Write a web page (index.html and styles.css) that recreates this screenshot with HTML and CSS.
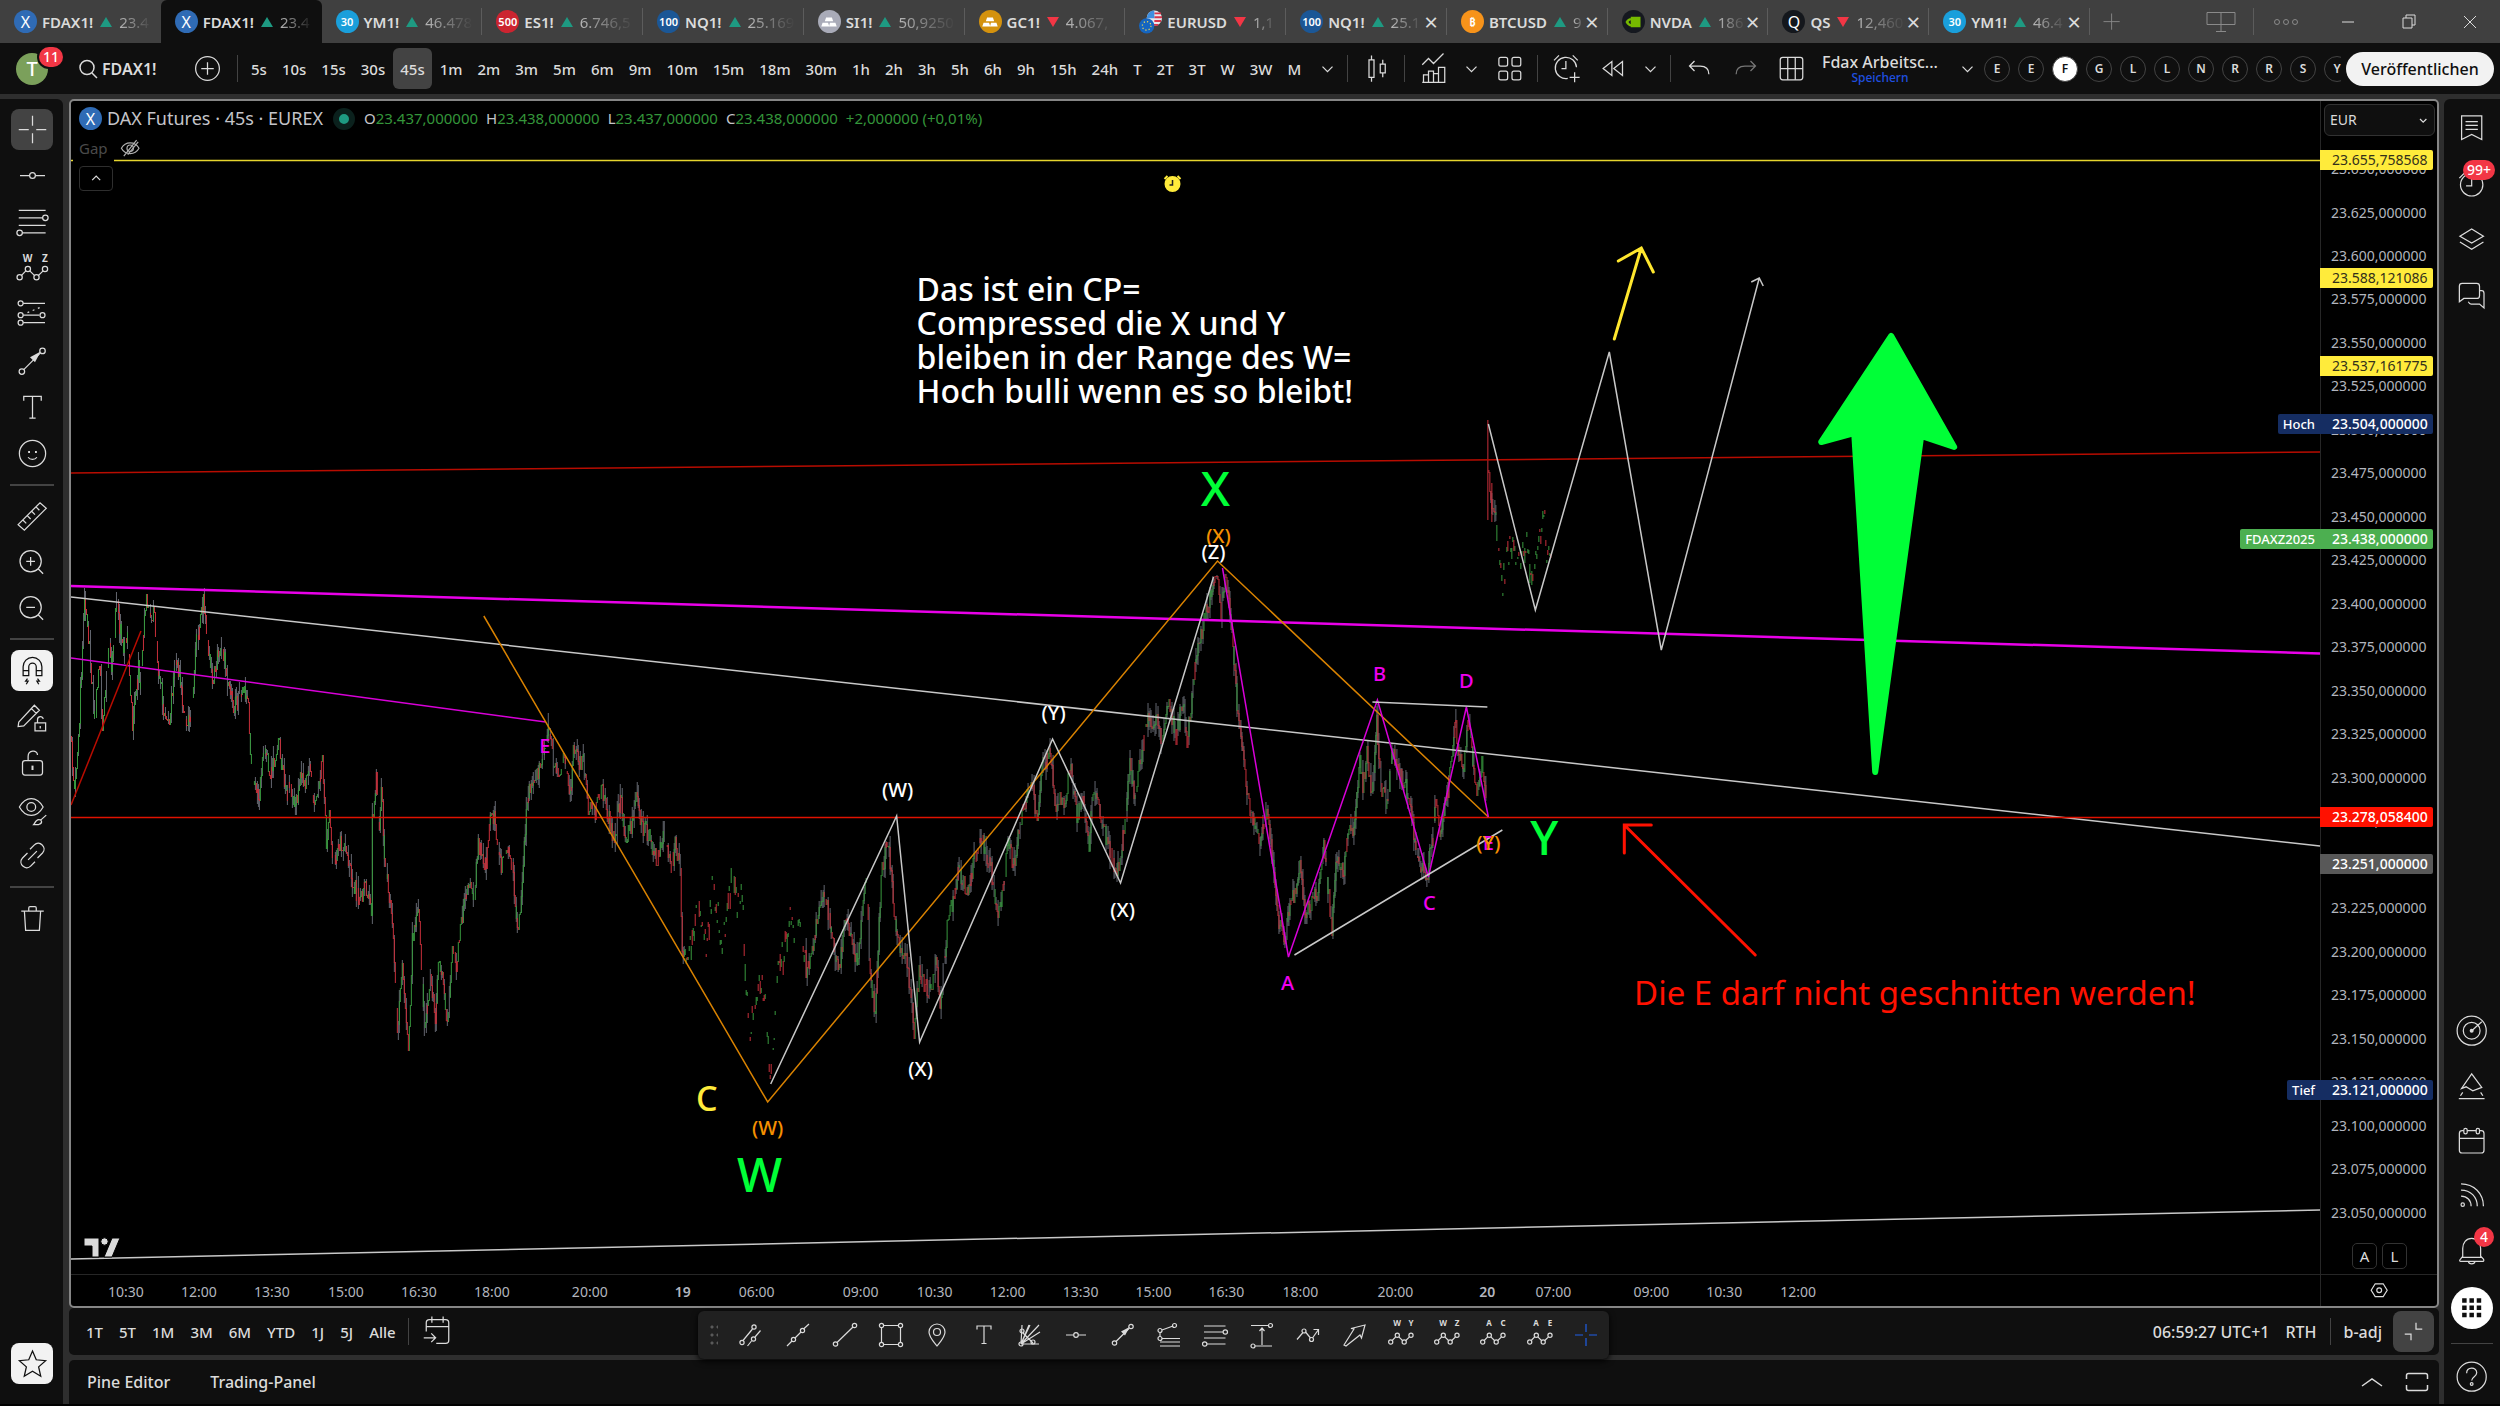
FILE: index.html
```html
<!DOCTYPE html>
<html lang="de">
<head>
<meta charset="utf-8">
<title>FDAX1! – Chart</title>
<link rel="stylesheet" href="styles.css">
</head>
<body>
<svg class="sprite" aria-hidden="true">
  <symbol id="i-search" viewBox="0 0 28 28"><circle cx="13" cy="12.500" r="7"/><path d="M18 18l5 5"/></symbol>
  <symbol id="i-plus-circle" viewBox="0 0 28 28"><circle cx="14" cy="14" r="9.500"/><path d="M14 9v10M9 14h10"/></symbol>
  <symbol id="i-chev-down" viewBox="0 0 28 28"><path d="M10 12.500l4 4 4-4"/></symbol>
  <symbol id="i-chev-up" viewBox="0 0 28 28"><path d="M9 16.500l5-5 5 5"/></symbol>
  <symbol id="i-candles" viewBox="0 0 28 28"><path d="M8 7h4v14H8zM10 3.500V7M10 21v3.500M17 10.500h4v7h-4zM19 7v3.500M19 17.500V21"/></symbol>
  <symbol id="i-indicators" viewBox="0 0 28 28"><path d="M5 11l5-5 4 4 8-8M6 25v-6h4v6M10 25V16h4v9M14 25v-7h4v7M18 25V13h5v12zM5 25h18"/></symbol>
  <symbol id="i-grid4" viewBox="0 0 28 28"><rect x="5.500" y="5" width="7" height="7" rx="1.500"/><rect x="16" y="5" width="7" height="7" rx="1.500"/><rect x="5.500" y="16" width="7" height="7" rx="1.500"/><rect x="16" y="16" width="7" height="7" rx="1.500"/></symbol>
  <symbol id="i-alert" viewBox="0 0 28 28"><path d="M22 13a8.500 8.500 0 1 0-7 8.900M13.500 8v6H10M4 7.500l4-4M19 3.500l4 4M20.500 17v8M16.500 21h8"/></symbol>
  <symbol id="i-replay" viewBox="0 0 28 28"><path d="M13.500 8.500v11L6.500 14zM22 8.500v11L15 14z"/></symbol>
  <symbol id="i-undo" viewBox="0 0 28 28"><path d="M10 8l-4 4 4 4M6 12h8.500c4 0 7 2 7 6.500"/></symbol>
  <symbol id="i-redo" viewBox="0 0 28 28"><path d="M18 8l4 4-4 4M22 12h-8.500c-4 0-7 2-7 6.500"/></symbol>
  <symbol id="i-layout" viewBox="0 0 28 28"><rect x="5" y="5" width="18" height="18" rx="2"/><path d="M11 5v18M17 5v18M5 14h18"/></symbol>
  <symbol id="i-cross" viewBox="0 0 28 28"><path d="M3 14h8M17 14h8M14 3v8M14 17v8"/></symbol>
  <symbol id="i-hline" viewBox="0 0 28 28"><path d="M4 14h7.500M16.500 14H24"/><circle cx="14" cy="14" r="2.300"/></symbol>
  <symbol id="i-fib" viewBox="0 0 28 28"><path d="M3 5h21.500M3 11h19M3 17h21.500M6 23h18.500"/><circle cx="24.300" cy="11" r="2.200"/><circle cx="3.700" cy="23" r="2.200"/></symbol>
  <symbol id="i-wave" viewBox="0 0 28 28"><path d="M5.200 19.500l3.500-3.600M11.800 15.900l3.700 3.600M18.800 19.500l3.700-3.600"/><circle cx="3.700" cy="21" r="2.100"/><circle cx="10.300" cy="14.300" r="2.100"/><circle cx="17.200" cy="21" r="2.100"/><circle cx="24" cy="14.300" r="2.100"/></symbol>
  <symbol id="i-position" viewBox="0 0 28 28"><path d="M6.500 5H24M6.500 14.500h13M6.500 20.500H24"/><path d="M10 12.500l12-5" stroke-dasharray="1.500 3"/><circle cx="4.500" cy="5" r="2"/><circle cx="4.500" cy="14.500" r="2"/><circle cx="22" cy="14.500" r="2"/><circle cx="4.500" cy="20.500" r="2"/></symbol>
  <symbol id="i-arrow" viewBox="0 0 28 28"><path d="M7 20.500L20 7.500"/><path class="solid" d="M12 10.500l8.500-4.500-4.500 8.500z"/><circle cx="5.500" cy="22" r="2.200"/><circle cx="22" cy="5.500" r="2.200"/></symbol>
  <symbol id="i-text" viewBox="0 0 28 28"><path d="M7 8.500V5h14v3.500M14 5v17.500M11.500 22.500h5"/></symbol>
  <symbol id="i-smile" viewBox="0 0 28 28"><circle cx="14" cy="14" r="10.500"/><path d="M10.500 17c1.500 2.300 5.500 2.300 7 0"/><path class="solid" d="M10.500 12h1.500v1.500h-1.500zM16 12h1.500v1.500H16z"/></symbol>
  <symbol id="i-ruler" viewBox="0 0 28 28"><path d="M2.500 20.500L20 3l5 4.500L7.500 25zM6.500 17l2.500 2.500M10 13.500l2.500 2.500M13.500 10l2.500 2.500M17 6.500L19.500 9"/></symbol>
  <symbol id="i-zoom-in" viewBox="0 0 28 28"><circle cx="12.500" cy="13" r="8.500"/><path d="M12.500 9.500v7M9 13h7M18.500 19l4 4"/></symbol>
  <symbol id="i-zoom-out" viewBox="0 0 28 28"><circle cx="12.500" cy="13" r="8.500"/><path d="M9 13h7M18.500 19l4 4"/></symbol>
  <symbol id="i-magnet" viewBox="0 0 28 28"><path d="M6.500 18v-7a7.500 7.500 0 0 1 15 0v7h-4.500v-7a3 3 0 0 0-6 0v7zM6.500 14h4.500M17 14h4.500M10 20.500l-1.500 2h2L9 25M18 20.500l1.500 2h-2L19 25"/></symbol>
  <symbol id="i-pencil-lock" viewBox="0 0 28 28"><path d="M3 18.500L15.500 5l4 4L7 21.500l-4.500.5zM13 7.500l4 4M16 19h8.500v6.500H16zM18 19v-2.500c0-3 4.500-3 4.500-.5M20.200 21.500v2"/></symbol>
  <symbol id="i-lock" viewBox="0 0 28 28"><rect x="6" y="12.500" width="16" height="11.500" rx="2"/><path d="M10.500 12.500V9c0-5 7.500-5.500 7.500-1"/><path class="solid" d="M13.200 16.500h1.600v3.500h-1.600z"/></symbol>
  <symbol id="i-eye-brush" viewBox="0 0 28 28"><path d="M3.500 12c5-9 14-9 19 0-5 9-14 9-19 0z"/><circle cx="13" cy="12" r="3.500"/><path d="M15 26c1-1 1.500-4 4-4s3.500 3 0 4zM20.500 22.500l4.500-4"/></symbol>
  <symbol id="i-link" viewBox="0 0 28 28"><path d="M12 9l3.500-3.500c4-4 10.500 2 6.500 6.500L18 16M16 19l-3.500 3.500c-4 4-10.500-2-6.500-6.500L10 12M10.500 17.500l7-7"/></symbol>
  <symbol id="i-trash" viewBox="0 0 28 28"><path d="M5 8h18M11 8V5.500c0-.6.400-1 1-1h4c.6 0 1 .4 1 1V8M7.500 8l1 15.500h11L20.500 8"/></symbol>
  <symbol id="i-star" viewBox="0 0 28 28"><path d="M14 4l3 7 7.500.7-5.600 5 1.700 7.500L14 20.200l-6.600 4 1.700-7.500-5.600-5L11 11z"/></symbol>
  <symbol id="i-watch" viewBox="0 0 28 28"><path d="M5 3.500h18v21l-9-4.500-9 4.500zM8.500 8.500h11M8.500 12h11M8.500 15.500h11"/></symbol>
  <symbol id="i-clock" viewBox="0 0 28 28"><circle cx="14" cy="15" r="10"/><path d="M14 9v7H9M3 9l5-5"/></symbol>
  <symbol id="i-layers" viewBox="0 0 28 28"><path d="M14 4.500L24.500 11 14 17 3.500 11zM3.500 16L14 22.500 24.500 16"/></symbol>
  <symbol id="i-chat" viewBox="0 0 28 28"><path d="M3 19.500V5.500c0-1.500 1-2.500 2.500-2.500h13c1.500 0 2.500 1 2.500 2.500V14c0 1.500-1 2.500-2.500 2.500H7zM21 9.500h2c1.500 0 2 1 2 2.500v13l-4-3.500h-7.500c-1.200 0-2-1-2.500-2"/></symbol>
  <symbol id="i-radar" viewBox="0 0 28 28"><circle cx="14" cy="14" r="13"/><circle cx="14" cy="14" r="7.500"/><circle class="solid" cx="14" cy="14" r="1.800"/><path d="M14 14l9-8"/></symbol>
  <symbol id="i-peak" viewBox="0 0 28 28"><path d="M2.500 25.500h23M4 23l2-3M24 23l-2-3M14 3.500L5 16.500l4-1.500 6 3.500 8-3z"/></symbol>
  <symbol id="i-calendar" viewBox="0 0 28 28"><rect x="3" y="5" width="22" height="20" rx="2.500"/><path d="M3 12h22"/><rect class="knock" x="7" y="3" width="3" height="5" rx="1.500"/><rect class="knock" x="18" y="3" width="3" height="5" rx="1.500"/></symbol>
  <symbol id="i-stream" viewBox="0 0 28 28"><path d="M4.500 3.500C16 3.500 24.500 12 24.500 23.500M4.500 9C13 9 19 15 19 23.500M4.500 14.500c5.500 0 9 3.500 9 9"/><circle cx="6" cy="22" r="1.500"/></symbol>
  <symbol id="i-bell" viewBox="0 0 28 28"><path d="M4 21.500l2-2.500v-7c0-5 3-9 8-9s8 4 8 9v7l2.500 2.500c.5 1 .5 2-.5 2H4c-1 0-1-1 0-2zM6 20h17M11 23.500c.5 3 5.500 3 6 0"/></symbol>
  <symbol id="i-dots9" viewBox="0 0 28 28"><path class="solid" d="M5.500 5.500h4v4h-4zM12 5.500h4v4h-4zM18.500 5.500h4v4h-4zM5.500 12h4v4h-4zM12 12h4v4h-4zM18.500 12h4v4h-4zM5.500 18.500h4v4h-4zM12 18.500h4v4h-4zM18.500 18.500h4v4h-4z"/></symbol>
  <symbol id="i-help" viewBox="0 0 28 28"><circle cx="14" cy="14" r="13"/><path d="M9.500 11c0-6 9-6 9-.5 0 3.500-4.500 3.500-4.500 7"/><circle cx="14" cy="20.500" r="1.200"/></symbol>
  <symbol id="i-eye-off" viewBox="0 0 28 28"><path d="M3 14c5-9 17-9 22 0-5 9-17 9-22 0zM6 24L22 4"/><circle cx="14" cy="14" r="4"/><path d="M11 22L24 6"/></symbol>
  <symbol id="i-goto" viewBox="0 0 28 28"><path d="M5 14V7c0-1.500 1-2.500 2.500-2.500h13C22 4.500 23 5.500 23 7v14c0 1.500-1 2.500-2.500 2.500H13M5 10h18M9.500 2v5M18.500 2v5M3 19h9M9 15.500l3.500 3.500L9 22.500"/></symbol>
  <symbol id="i-parallel" viewBox="0 0 28 28"><path d="M5 19.500L14.500 8M9.500 25l4-5M17 16l5.500-6.500"/><circle cx="4" cy="21.500" r="2.100"/><circle cx="16" cy="6" r="2.100"/><circle cx="15.500" cy="18" r="2.100"/></symbol>
  <symbol id="i-extended" viewBox="0 0 28 28"><path d="M3 25l5-5M11 17l6-6M19.500 8L25 3"/><circle cx="9.500" cy="18.500" r="2.100"/><circle cx="18.500" cy="9.500" r="2.100"/></symbol>
  <symbol id="i-trend" viewBox="0 0 28 28"><path d="M6 21.500L22 6"/><circle cx="4.500" cy="23" r="2.200"/><circle cx="23.500" cy="4.500" r="2.200"/></symbol>
  <symbol id="i-rect" viewBox="0 0 28 28"><path d="M7 4.500h14M7 23.500h14M4.500 7v14M23.500 7v14"/><circle cx="4.500" cy="4.500" r="2.100"/><circle cx="23.500" cy="4.500" r="2.100"/><circle cx="4.500" cy="23.500" r="2.100"/><circle cx="23.500" cy="23.500" r="2.100"/></symbol>
  <symbol id="i-pin" viewBox="0 0 28 28"><path d="M14 25c-4-5-8-9-8-14a8 8 0 0 1 16 0c0 5-4 9-8 14z"/><circle cx="14" cy="11" r="3.500"/></symbol>
  <symbol id="i-gann" viewBox="0 0 28 28"><path d="M5 23L6 4M5 23L13 4M5 23L23 4M5 23L24 11M5 23h18M5 23L14 4M7 12l10 10"/><circle cx="5" cy="23" r="2"/><circle cx="6" cy="10" r="2"/><circle cx="17" cy="21" r="2"/></symbol>
  <symbol id="i-fibext" viewBox="0 0 28 28"><path d="M5 16V11M7 9l11-4M7 17.500h18M5 21h20M5 25h20"/><circle cx="5" cy="9.500" r="2"/><circle cx="19.500" cy="4.500" r="2"/><circle cx="5" cy="17.500" r="2"/></symbol>
  <symbol id="i-range" viewBox="0 0 28 28"><path d="M3 4.500h17.500M7 25h17M14 24V8M11.500 10L14 7l2.500 3"/><circle cx="22.500" cy="4.500" r="2"/><circle cx="5" cy="25" r="2"/></symbol>
  <symbol id="i-pattern" viewBox="0 0 28 28"><path d="M3 18.500l6-7M11.500 11l5 6M18.500 17L24.500 8.500M19.500 8.500h5v5.500"/><circle cx="10" cy="10" r="2"/><circle cx="17.500" cy="18.500" r="2"/></symbol>
  <symbol id="i-bigarrow" viewBox="0 0 28 28"><path d="M4 24L14 8l-3-.5L25 4l-3.500 13-1.500-3L6 25z"/></symbol>
  <symbol id="i-collapse" viewBox="0 0 28 28"><path d="M16 7v5h5M7 16h5v5"/></symbol>
  <symbol id="i-frame" viewBox="0 0 28 28"><path d="M3.500 11V7.500c0-1.500 1-2 2-2h17c1 0 2 .5 2 2V11M3.500 17v3.500c0 1.500 1 2 2 2h17c1 0 2-.5 2-2V17"/></symbol>
  <symbol id="i-hex" viewBox="0 0 28 28"><path d="M9 6h10l5 8-5 8H9l-5-8z"/><circle cx="14" cy="14" r="3"/></symbol>
  <symbol id="i-bars" viewBox="0 0 28 28"><path class="solid" d="M9.500 7h9l2 6h-13zM4 15h8.500l2 6H2zM15.500 15H24l2 6H14z"/></symbol>
</svg>

<div class="app">
  <header class="tabbar">
    <nav class="tabs" id="tabs" aria-label="Symbole"></nav>
    <button class="tab-add" aria-label="Neuer Tab"><svg class="ic"><path d="M14 5v18M5 14h18"/></svg></button>
    <div class="winctl">
      <button aria-label="Anordnen"><svg class="ic wide"><path d="M3 4.500h28v12H3zM17 4.500v19M12 23.500h10"/></svg></button>
      <i class="vsep"></i>
      <button aria-label="Mehr"><svg class="ic"><circle cx="5" cy="14" r="2.500"/><circle cx="14" cy="14" r="2.500"/><circle cx="23" cy="14" r="2.500"/></svg></button>
      <button class="bright" aria-label="Minimieren"><svg class="ic"><path d="M8 14h12"/></svg></button>
      <button class="bright" aria-label="Fenster"><svg class="ic"><path d="M8 10h9v10H8zM11 10V7h9v10h-3"/></svg></button>
      <button class="bright" aria-label="Schließen"><svg class="ic"><path d="M8 8l12 12M20 8L8 20"/></svg></button>
    </div>
  </header>

  <div class="toolbar">
    <button class="avatar" aria-label="Profil">T<b class="badge">11</b></button>
    <button class="symbol"><svg class="ic sm"><use href="#i-search"/></svg>FDAX1!</button>
    <button class="add" aria-label="Vergleichen"><svg class="ic"><use href="#i-plus-circle"/></svg></button>
    <i class="vsep"></i>
    <div class="intervals">
      <button>5s</button><button>10s</button><button>15s</button><button>30s</button><button class="on">45s</button><button>1m</button><button>2m</button><button>3m</button><button>5m</button><button>6m</button><button>9m</button><button>10m</button><button>15m</button><button>18m</button><button>30m</button><button>1h</button><button>2h</button><button>3h</button><button>5h</button><button>6h</button><button>9h</button><button>15h</button><button>24h</button><button>T</button><button>2T</button><button>3T</button><button>W</button><button>3W</button><button>M</button>
    </div>
    <div class="actions">
      <button class="chev" aria-label="Intervalle"><svg class="ic"><use href="#i-chev-down"/></svg></button>
      <i class="vsep"></i>
      <button aria-label="Kerzen"><svg class="ic"><use href="#i-candles"/></svg></button>
      <i class="vsep"></i>
      <button aria-label="Indikatoren"><svg class="ic"><use href="#i-indicators"/></svg></button>
      <button class="chev" aria-label="Favoriten"><svg class="ic"><use href="#i-chev-down"/></svg></button>
      <button aria-label="Vorlagen"><svg class="ic"><use href="#i-grid4"/></svg></button>
      <i class="vsep"></i>
      <button aria-label="Alarm"><svg class="ic"><use href="#i-alert"/></svg></button>
      <button aria-label="Replay"><svg class="ic"><use href="#i-replay"/></svg></button>
      <button class="chev" aria-label="Replay-Optionen"><svg class="ic"><use href="#i-chev-down"/></svg></button>
      <i class="vsep"></i>
      <button aria-label="Rückgängig"><svg class="ic"><use href="#i-undo"/></svg></button>
      <button class="dim" aria-label="Wiederholen"><svg class="ic"><use href="#i-redo"/></svg></button>
      <button aria-label="Layout"><svg class="ic"><use href="#i-layout"/></svg></button>
      <button class="layout-name"><span>Fdax Arbeitsc...</span><small>Speichern</small></button>
      <button class="chev" aria-label="Layouts"><svg class="ic"><use href="#i-chev-down"/></svg></button>
      <div class="quick">
        <button>E</button><button>E</button><button class="on">F</button><button>G</button><button>L</button><button>L</button><button>N</button><button>R</button><button>R</button><button>S</button><button>Y</button>
      </div>
      <button class="publish">Veröffentlichen</button>
    </div>
  </div>

  <div class="main">
    <aside class="side left">
      <div class="tools draw">
        <button class="on" aria-label="Fadenkreuz"><svg class="ic"><use href="#i-cross"/></svg></button>
        <button aria-label="Linie"><svg class="ic"><use href="#i-hline"/></svg></button>
        <button aria-label="Fibonacci"><svg class="ic"><use href="#i-fib"/></svg></button>
        <button aria-label="Wellen"><svg class="ic"><use href="#i-wave"/><text x="10" y="9">W</text><text x="24" y="9">Z</text></svg></button>
        <button aria-label="Position"><svg class="ic"><use href="#i-position"/></svg></button>
        <button aria-label="Pfeil"><svg class="ic"><use href="#i-arrow"/></svg></button>
        <button aria-label="Text"><svg class="ic"><use href="#i-text"/></svg></button>
        <button aria-label="Emoji"><svg class="ic"><use href="#i-smile"/></svg></button>
      </div>
      <hr>
      <div class="tools zoom">
        <button aria-label="Messen"><svg class="ic"><use href="#i-ruler"/></svg></button>
        <button aria-label="Vergrößern"><svg class="ic"><use href="#i-zoom-in"/></svg></button>
        <button aria-label="Verkleinern"><svg class="ic"><use href="#i-zoom-out"/></svg></button>
      </div>
      <hr>
      <div class="tools modes">
        <button class="lit" aria-label="Magnet"><svg class="ic"><use href="#i-magnet"/></svg></button>
        <button aria-label="Zeichenmodus"><svg class="ic"><use href="#i-pencil-lock"/></svg></button>
        <button aria-label="Sperren"><svg class="ic"><use href="#i-lock"/></svg></button>
        <button aria-label="Ausblenden"><svg class="ic"><use href="#i-eye-brush"/></svg></button>
        <button aria-label="Verknüpfen"><svg class="ic"><use href="#i-link"/></svg></button>
      </div>
      <hr>
      <div class="tools bin"><button aria-label="Löschen"><svg class="ic"><use href="#i-trash"/></svg></button></div>
      <div class="tools fav"><button class="lit" aria-label="Favoriten"><svg class="ic"><use href="#i-star"/></svg></button></div>
    </aside>

    <main class="center">
      <section class="chart">
        <div class="pane" id="pane">
          <svg class="plot" viewBox="71 101 2250 1173" preserveAspectRatio="none" aria-label="DAX Futures Kursverlauf">
            <path class="wick" id="wicks"/><path class="up" id="ups"/><path class="down" id="downs"/>
            <path class="ln alarm" d="M71 160.500H2321"/>
            <path class="ln dred" d="M71 473L2321 452"/>
            <path class="ln mag thick" d="M71 586L2321 653.500"/>
            <path class="ln white" d="M71 597L2321 846"/>
            <path class="ln mag" d="M71 658L546 722"/>
            <path class="ln dred" d="M71 805L141 631"/>
            <path class="ln red" d="M71 817.500H2321"/>
            <path class="ln white" d="M71 1259L2321 1210"/>
            <path class="ln orange" d="M484 616L768 1102L1218 561L1489 817"/>
            <path class="ln white" d="M771 1084L897 816L920 1042L1053 739L1121 883L1214 577"/>
            <path class="ln mag" d="M1223 568L1289 957L1378 700L1429 877L1467 707L1489 817"/>
            <path class="ln white" d="M1373 702L1488 707M1295 955L1503 830"/>
            <path class="ln white" d="M1489 424L1536 610L1610 352L1662 650L1760 278M1752 282L1760 278L1764 286"/>
            <path class="ln yellow" d="M1615 339L1642 248M1619 261L1642 248L1654 272"/>
            <path class="ln arrowred" d="M1756 955L1625 825M1652 825H1625V853"/>
            <path class="fatarrow" d="M1892 336L1955 447L1922 436L1876 772L1855 433L1822 442z"/>
            <g class="clock"><circle cx="1173" cy="184" r="7"/><path d="M1165 179l3-3M1181 179l-3-3"/><path class="hand" d="M1173 180v5h-3"/></g>
          </svg>
          <div class="legend">
            <div class="title"><b class="logo dax">X</b><span>DAX Futures · 45s · EUREX</span><i class="live"></i>
              <span class="ohlc"><span>O<em>23.437,000000</em></span><span>H<em>23.438,000000</em></span><span>L<em>23.437,000000</em></span><span>C<em>23.438,000000</em></span><span><em>+2,000000 (+0,01%)</em></span></span></div>
            <div class="study"><span>Gap</span><svg class="ic xs"><use href="#i-eye-off"/></svg></div>
            <button class="fold" aria-label="Einklappen"><svg class="ic xs"><use href="#i-chev-up"/></svg></button>
          </div>
          <p class="note">Das ist ein CP=<br>Compressed die X und Y<br>bleiben in der Range des W=<br>Hoch bulli wenn es so bleibt!</p>
          <p class="warn">Die E darf nicht geschnitten werden!</p>
          <svg class="tv" viewBox="0 0 38 22" aria-label="TradingView"><path d="M1 1h15v19H9V9H1zM29 1h8l-8 19h-8z"/><circle cx="21.500" cy="4.500" r="3.700"/></svg>
        </div>
        <div class="prices" id="prices">
          <label class="cur"><select aria-label="Währung"><option>EUR</option></select><svg class="ic xs"><use href="#i-chev-down"/></svg></label>
          <div class="scale"><button>A</button><button>L</button></div>
        </div>
        <div class="times" id="times"></div>
        <div class="gear"><button aria-label="Einstellungen"><svg class="ic xs"><use href="#i-hex"/></svg></button></div>
      </section>

      <div class="rangebar">
        <div class="ranges"><button>1T</button><button>5T</button><button>1M</button><button>3M</button><button>6M</button><button>YTD</button><button>1J</button><button>5J</button><button>Alle</button></div>
        <i class="vsep"></i>
        <button class="goto" aria-label="Gehe zu"><svg class="ic"><use href="#i-goto"/></svg></button>
        <div class="status"><button>06:59:27 UTC+1</button><button>RTH</button><i class="vsep"></i><button>b-adj</button><button class="on" aria-label="Skalierung"><svg class="ic"><use href="#i-collapse"/></svg></button></div>
        <div class="float">
          <i class="grip"></i>
          <div class="picks">
            <button aria-label="Kanal"><svg class="ic"><use href="#i-parallel"/></svg></button>
            <button aria-label="Verlängerte Linie"><svg class="ic"><use href="#i-extended"/></svg></button>
            <button aria-label="Trendlinie"><svg class="ic"><use href="#i-trend"/></svg></button>
            <button aria-label="Rechteck"><svg class="ic"><use href="#i-rect"/></svg></button>
            <button aria-label="Markierung"><svg class="ic"><use href="#i-pin"/></svg></button>
            <button aria-label="Text"><svg class="ic"><use href="#i-text"/></svg></button>
            <button aria-label="Gann"><svg class="ic"><use href="#i-gann"/></svg></button>
            <button aria-label="Horizontale"><svg class="ic"><use href="#i-hline"/></svg></button>
            <button aria-label="Pfeil"><svg class="ic"><use href="#i-arrow"/></svg></button>
            <button aria-label="Fib-Erweiterung"><svg class="ic"><use href="#i-fibext"/></svg></button>
            <button aria-label="Fib-Retracement"><svg class="ic"><use href="#i-fib"/></svg></button>
            <button aria-label="Preisspanne"><svg class="ic"><use href="#i-range"/></svg></button>
            <button aria-label="Pfad"><svg class="ic"><use href="#i-pattern"/></svg></button>
            <button aria-label="Großer Pfeil"><svg class="ic"><use href="#i-bigarrow"/></svg></button>
            <button aria-label="WXY"><svg class="ic"><use href="#i-wave"/><text x="10" y="5">W</text><text x="24" y="5">Y</text></svg></button>
            <button aria-label="WXYXZ"><svg class="ic"><use href="#i-wave"/><text x="10" y="5">W</text><text x="24" y="5">Z</text></svg></button>
            <button aria-label="ABC"><svg class="ic"><use href="#i-wave"/><text x="10" y="5">A</text><text x="24" y="5">C</text></svg></button>
            <button aria-label="ABCDE"><svg class="ic"><use href="#i-wave"/><text x="10" y="5">A</text><text x="24" y="5">E</text></svg></button>
            <button class="blue" aria-label="Fadenkreuz"><svg class="ic"><use href="#i-cross"/></svg></button>
          </div>
        </div>
      </div>

      <div class="dock">
        <button>Pine Editor</button><button>Trading-Panel</button>
        <div class="dock-ctl"><button aria-label="Aufklappen"><svg class="ic sm"><path d="M4 18l10-7 10 7"/></svg></button><button aria-label="Maximieren"><svg class="ic sm"><use href="#i-frame"/></svg></button></div>
      </div>
    </main>

    <aside class="side right">
      <div class="rtop">
        <button aria-label="Watchlist"><svg class="ic"><use href="#i-watch"/></svg></button>
        <button aria-label="Alarme"><svg class="ic"><use href="#i-clock"/></svg><b class="badge">99+</b></button>
        <button aria-label="Objekte"><svg class="ic"><use href="#i-layers"/></svg></button>
        <button aria-label="Chats"><svg class="ic"><use href="#i-chat"/></svg></button>
      </div>
      <div class="rbot">
        <button aria-label="Screener"><svg class="ic"><use href="#i-radar"/></svg></button>
        <button aria-label="Pine"><svg class="ic"><use href="#i-peak"/></svg></button>
        <button aria-label="Kalender"><svg class="ic"><use href="#i-calendar"/></svg></button>
        <button aria-label="Streams"><svg class="ic"><use href="#i-stream"/></svg></button>
        <button aria-label="Mitteilungen"><svg class="ic"><use href="#i-bell"/></svg><b class="badge">4</b></button>
        <button class="apps" aria-label="Produkte"><svg class="ic"><use href="#i-dots9"/></svg></button>
        <hr>
        <button aria-label="Hilfe"><svg class="ic"><use href="#i-help"/></svg></button>
      </div>
    </aside>
  </div>
</div>
<script src="app.js"></script>
</body>
</html>
```
FILE: styles.css
```css
* { box-sizing: border-box; }
html, body { height: 100%; margin: 0; }
body { background: #2e2e2e; color: #dbdbdb; font: 500 15px/20px "Noto Sans", "Open Sans", sans-serif; overflow: hidden; }
button { background: none; border: 0; padding: 0; margin: 0; color: inherit; font: inherit; display: flex; align-items: center; justify-content: center; white-space: nowrap; cursor: pointer; }
.sprite { position: absolute; width: 0; height: 0; }
.ic { width: 28px; height: 28px; zoom: 1.25; fill: none; stroke: currentColor; stroke-width: 1; overflow: visible; flex: none; display: block; }
.ic.wide { width: 34px; }
.ic.sm { zoom: 1; stroke-width: 1.5; }
.ic.xs { zoom: .8; stroke-width: 1.5; }
.ic text { font: 700 8px/8px "Noto Sans", sans-serif; fill: currentColor; stroke: none; text-anchor: middle; }
.solid { fill: currentColor; stroke: none; }
.knock { fill: #0f0f0f; }
.vsep { width: 1px; height: 27px; background: #434343; margin: 0 5px; flex: none; }
.badge { position: absolute; background: #f23645; color: #fff; border-radius: 10px; height: 20px; min-width: 20px; padding: 0 4px; font: 500 14px/20px "Noto Sans", sans-serif; text-align: center; }

.app { height: 100vh; display: flex; flex-direction: column; border-bottom: 2px solid #000; }

/* symbol tabs */
.tabbar { height: 43px; display: flex; align-items: center; background: #404040; flex: none; }
.tabs { flex: 0 0 83.6%; min-width: 0; display: flex; height: 43px; }
.tab { flex: 1 1 0; min-width: 0; display: flex; align-items: center; padding: 0 9px 0 14px; position: relative; color: #dbdbdb; text-decoration: none; overflow: hidden; }
.tab::after { content: ""; position: absolute; right: 0; top: 8px; height: 27px; width: 1px; background: #5c5c5c; }
.tab.active { background: #0f0f0f; border-radius: 6px 6px 0 0; }
.tab.active::after, .tab.first::after { display: none; }
.tab b { font-weight: 600; margin-left: 5px; }
.tab i { margin: 0 7px; flex: none; border: 6px solid transparent; border-top: 0; border-bottom: 10px solid #1e9a82; }
.tab i.dn { border-bottom: 0; border-top: 10px solid #f23645; }
.tab span { flex: 1; min-width: 0; overflow: hidden; font-weight: 400; color: #b8b8b8; -webkit-mask-image: linear-gradient(90deg, #000, transparent); mask-image: linear-gradient(90deg, #000, transparent); }
.tab em { font-style: normal; font-size: 24px; font-weight: 400; flex: none; }
.logo { width: 23px; height: 23px; border-radius: 50%; flex: none; display: flex; align-items: center; justify-content: center; color: #fff; font: 600 11px/12px "Noto Sans", sans-serif; background: #2f6bb5; }
.tab b.logo { margin: 0; font-size: 11px; }
.logo.dax { font-size: 16px; font-weight: 400; }
.tab b.logo.dax, .tab b.logo.q { font-size: 16px; font-weight: 400; }
.logo.n30 { background: #1a9fdb; } .logo.n500 { background: #cc2430; } .logo.n100 { background: #1b5796; }
.logo.silver { background: #a9abb8; } .logo.gold { background: #d4920e; }
.logo.btc { background: #f7931a; } .logo.nv { background: #15181f; color: #76b900; } .logo.q { background: #14171c; }
.logo svg { width: 18px; height: 18px; fill: currentColor; }
.logo.fx { background: none; }
.logo.fx svg { width: 24px; height: 24px; }
.tab-add { color: #8a8a8a; width: 44px; }
.winctl .ic { zoom: 1; }
.tab-add .ic { zoom: .9; }
.winctl { margin-left: auto; display: flex; align-items: center; color: #8a8a8a; }
.winctl .vsep { background: #5c5c5c; margin: 0 0 0 15px; }
.winctl button { width: 63px; }
.winctl button:first-child { width: 34px; }
.winctl .bright { color: #dbdbdb; width: 61px; }

/* top toolbar */
.toolbar { height: 51px; display: flex; align-items: center; background: #0f0f0f; flex: none; padding-right: 6px; margin-bottom: 5px; }
.avatar { position: relative; width: 32px; height: 32px; margin-left: 16px; border-radius: 50%; background: #7ba05b; color: #fff; font-size: 20px; }
.avatar .badge { left: 23px; top: -6px; box-shadow: 0 0 0 2px #0f0f0f; }
.symbol { margin-left: 26px; width: 108px; justify-content: flex-start; font-size: 16px; font-weight: 600; }
.add { width: 35px; margin-left: 8px; }
.add + .vsep { margin: 0 6px 0 12px; }
.intervals { display: flex; gap: 1px; }
.intervals button { height: 41px; padding: 0 7px; border-radius: 6px; }
.intervals .on { background: #434343; }
.actions { margin-left: auto; display: flex; align-items: center; flex: none; }
.actions > button { width: 46px; height: 41px; }
.actions > .chev { width: 30px; }
.dim { color: #777; }
.actions > .layout-name { width: 138px; padding-left: 8px; display: grid; justify-content: start; justify-items: center; align-content: center; font-size: 16px; line-height: 18px; }
.layout-name small { font-size: 12px; line-height: 14px; color: #1f4fe0; }
.quick { width: 357px; margin: 0 5px 0 2px; display: flex; gap: 8px; overflow: hidden; }
.quick button { width: 26px; height: 26px; flex: none; border: 1px solid #434343; border-radius: 50%; font-size: 12px; font-weight: 600; }
.quick .on { background: #fff; color: #0f0f0f; }
.actions > .publish { width: 148px; height: 34px; border-radius: 17px; background: #f2f2f2; color: #0f0f0f; font-size: 16px; }

/* body */
.main { flex: 1; min-height: 0; display: grid; grid-template-columns: 63px minmax(0, 1fr) 55px; column-gap: 6px; }
.side { background: #0f0f0f; display: flex; flex-direction: column; }
.left { border-radius: 0 6px 0 0; padding-top: 7px; }
.right { border-radius: 6px 0 0 0; margin-left: -1px; }
.side hr { width: 44px; height: 2px; border: 0; background: #434343; margin: 7px auto 7px 10px; flex: none; }
.tools { display: grid; grid-auto-rows: 1fr; justify-items: start; align-items: center; padding-left: 11px; }
.tools button { width: 42px; height: 41px; border-radius: 8px; }
.tools .on, .status .on { background: #434343; }
.tools .lit { background: #f2f2f2; color: #0f0f0f; }
.draw { height: 371px; } .zoom { height: 138px; } .modes { height: 232px; } .bin { height: 46px; }
.fav { margin-top: auto; height: 46px; margin-bottom: 18px; }
.rtop, .rbot { display: flex; flex-direction: column; align-items: center; }
.right button { position: relative; width: 54px; height: 55px; }
.rtop { gap: 1px; padding-top: 1px; }
.rbot { margin-top: auto; }
.right .ic { zoom: 1.12; stroke-width: 1.1; }
.rtop .badge { left: 18px; top: 4px; width: 32px; }
.rbot .badge { left: 29px; top: 4px; }
.right .apps { margin-top: 2px; }
.right .apps::before { content: ""; position: absolute; width: 42px; height: 42px; border-radius: 50%; background: #fff; }
.right .apps .ic { position: relative; color: #0f0f0f; }
.right hr { margin: 8px 6px 5px; width: 42px; height: 1px; }

.center { display: flex; flex-direction: column; min-width: 0; }
.chart { flex: 1; min-height: 0; border: 2px solid #858585; border-radius: 5px; background: #000; display: grid; grid-template: minmax(0, 1fr) 32px / minmax(0, 1fr) 117px; }
.pane { position: relative; min-width: 0; }
.plot { position: absolute; inset: 0; width: 100%; height: 100%; fill: none; }
.wick { stroke: #63666f; } .up { stroke: #389a3e; } .down { stroke: #c92f3a; }
.wick, .up, .down { stroke-width: 1; shape-rendering: crispEdges; }
.ln { stroke-width: 1.5; }
.alarm { stroke: #e6d52e; } .white { stroke: #c8c8c8; } .orange { stroke: #d98200; }
.red { stroke: #e01200; } .dred { stroke: #b80c00; }
.mag { stroke: #d800d8; stroke-width: 1.5; } .thick { stroke: #e800e8; stroke-width: 2.5; }
.yellow { stroke: #ffe72e; stroke-width: 3; stroke-linecap: round; }
.arrowred { stroke: #ff1100; stroke-width: 3; stroke-linecap: round; }
.fatarrow { fill: #00ff37; stroke: #00ff37; stroke-width: 6; stroke-linejoin: round; }
.clock { stroke: #ffeb3b; stroke-width: 2; } .clock circle { fill: #ffeb3b; } .clock .hand { stroke: #222; stroke-width: 1.5; }
.legend { position: absolute; left: 8px; top: 6px; }
.title { display: flex; align-items: center; gap: 5px; font-size: 18px; line-height: 23px; height: 23px; color: #c4c4c9; font-weight: 400; }
.live { width: 22px; height: 22px; border-radius: 50%; border: 6px solid #0b211d; background: #1e9a82; margin-left: 5px; }
.ohlc { display: flex; gap: 8px; font-size: 15px; margin-left: 4px; }
.ohlc em { font-style: normal; color: #34953a; }
.study { display: inline-flex; align-items: center; gap: 11px; height: 28px; margin-left: -6px; padding: 0 0 0 6px; margin-top: 4px; color: #4a4a4a; font-size: 15px; font-weight: 400; background: linear-gradient(90deg, #000 41px, transparent 41px); }
.study .ic { color: #b0b0b0; }
.fold { width: 34px; height: 25px; border: 1px solid #2e2e2e; border-radius: 4px; margin-top: 4px; }
.note, .warn { position: absolute; margin: 0; color: #fff; font-size: 32px; line-height: 34px; font-weight: 500; white-space: nowrap; }
.note { left: 37.6%; top: 14.6%; }
.warn { left: 69.5%; top: 74.6%; color: #ff1100; font-size: 33px; font-weight: 400; }
.mark { position: absolute; transform: translate(-50%, -50%); font-size: 20px; line-height: 1; }
.mark.w { color: #fff; } .mark.o { color: #f59000; } .mark.m, .mark.em { color: #f000f0; }
.mark.g { color: #00ff37; font-size: 48px; } .mark.y { color: #ffeb3b; font-size: 34px; }
.tv { position: absolute; left: 12px; bottom: 15px; width: 38px; height: 22px; fill: #dbdbdb; stroke: #000; stroke-width: 1; }
.flag { position: absolute; right: 0; transform: translateY(-50%); height: 20px; padding: 0 5px; color: #fff; font-size: 13px; border-radius: 2px 0 0 2px; font-weight: 600; }
.prices { position: relative; border-left: 1px solid #262626; font-size: 14px; color: #b2b5be; font-weight: 400; }
.tick, .tag { position: absolute; left: 10px; transform: translateY(-50%); }
.tag { left: -1px; width: 113px; height: 20px; padding-left: 12px; border-radius: 0 2px 2px 0; }
.tag.yel { background: #ffeb3b; color: #33301a; }
.tag.navy, .flag.navy { background: #152d62; color: #fff; font-weight: 500; }
.tag.grn, .flag.grn { background: #4caf50; color: #fff; font-weight: 500; }
.tag.rd { background: #ff1100; color: #fff; font-weight: 500; }
.tag.gry { background: #585858; color: #fff; font-weight: 500; }
.cur { position: absolute; left: 3px; right: 2px; top: 3px; height: 32px; z-index: 2; display: flex; align-items: center; border: 1px solid #323232; border-radius: 6px; background: #0f0f0f; }
.cur select { appearance: none; border: 0; background: none; color: #dbdbdb; font: 400 14px/20px "Noto Sans", sans-serif; width: 100%; height: 30px; padding: 0 0 0 5px; }
.cur .ic { position: absolute; right: 0; color: #dbdbdb; }
.scale { position: absolute; left: 31px; bottom: 5px; display: flex; gap: 5px; z-index: 2; }
.scale button { width: 25px; height: 26px; border: 1px solid #323232; border-radius: 5px; color: #dbdbdb; font-size: 15px; background: #000; }
.times { position: relative; border-top: 1px solid #262626; color: #b2b5be; font-size: 14px; font-weight: 400; line-height: 33px; }
.times span { position: absolute; transform: translateX(-50%); }
.times .day { font-weight: 600; }
.gear { border-top: 1px solid #262626; border-left: 1px solid #262626; display: flex; align-items: center; justify-content: center; }

.rangebar { position: relative; height: 47px; flex: none; background: #0f0f0f; border-radius: 5px; display: flex; align-items: center; padding: 0 5px 0 10px; }
.ranges { display: flex; gap: 2px; }
.ranges button { padding: 0 7px; height: 34px; }
.goto { margin-left: 6px; }
.status { margin-left: auto; display: flex; align-items: center; font-size: 16px; }
.status button { padding: 0 8px; height: 41px; }
.status .on { width: 41px; padding: 0; border-radius: 8px; margin-left: 3px; }
.float { position: absolute; z-index: 3; left: 629px; top: 3px; width: 911px; height: 48px; background: #202020; border-radius: 6px; display: flex; align-items: center; box-shadow: 0 2px 6px #000; }
.grip { width: 9px; height: 24px; margin: 0 11px; background: radial-gradient(circle, #5a5a5a 1px, transparent 2px) 0 0 / 6px 8px; }
.picks { flex: 1; display: grid; grid-template-columns: repeat(19, 1fr); justify-items: center; }
.picks .ic { zoom: 1; width: 28px; stroke-width: 1.2; }
.blue { color: #1f5fe8; }
.dock { height: 44px; margin-top: 5px; flex: none; background: #0f0f0f; border-radius: 5px 5px 0 0; display: flex; align-items: center; padding-left: 18px; gap: 40px; font-size: 16px; }
.dock-ctl { margin-left: auto; display: flex; gap: 17px; padding-right: 8px; }
```
FILE: app.js
```js
const VIEW = { x: 71, y: 101, w: 2250, h: 1173 };
const px = x => ((x - VIEW.x) / VIEW.w * 100).toFixed(3) + '%';
const py = y => ((y - VIEW.y) / VIEW.h * 100).toFixed(3) + '%';
const priceY = p => 212.5 + (23625 - p) * 1.7396;

const bars = '<svg viewBox="0 0 28 28"><use href="#i-bars"/></svg>';
const fx = '<svg viewBox="0 0 24 24"><circle cx="16" cy="8" r="8" fill="#e8e8ee"/><path d="M16 3h7M16 7h8M16 11h7M12 15h8" stroke="#d8344a" stroke-width="2"/><path d="M8 8a8 8 0 0 1 8-8v8z" fill="#3f8fe0"/><circle cx="8" cy="16" r="8" fill="#1565c0"/><circle cx="8" cy="16" r="4.500" fill="none" stroke="#e8d25a" stroke-width="1.300" stroke-dasharray="1.300 2.200"/></svg>';
const nv = '<svg viewBox="0 0 24 24"><path d="M9 5h13v14H9zM2 12c3-6 9-7 13-3v3c-3-3-7-3-9 0 2 4 6 4 9 1v3c-5 4-10 2-13-4z"/></svg>';
const tabs = [
  ['dax', 'X', 'FDAX1!', 1, '23.4', 0], ['dax', 'X', 'FDAX1!', 1, '23.4', 0],
  ['n30', '30', 'YM1!', 1, '46.478', 0], ['n500', '500', 'ES1!', 1, '6.746,5', 0],
  ['n100', '100', 'NQ1!', 1, '25.169', 0], ['silver', bars, 'SI1!', 1, '50,9250', 0],
  ['gold', bars, 'GC1!', 0, '4.067,', 0], ['fx', fx, 'EURUSD', 0, '1,1', 0],
  ['n100', '100', 'NQ1!', 1, '25.1', 1], ['btc', '₿', 'BTCUSD', 1, '9', 1],
  ['nv', nv, 'NVDA', 1, '186', 1], ['q', 'Q', 'QS', 0, '12,460', 1],
  ['n30', '30', 'YM1!', 1, '46.4', 1]
];
document.getElementById('tabs').innerHTML = tabs.map(([c, l, s, up, p, x], i) =>
  `<a href="#" class="tab${i === 0 ? ' first' : ''}${i === 1 ? ' active' : ''}"><b class="logo ${c}">${l}</b><b>${s}</b><i class="${up ? '' : 'dn'}"></i><span>${p}</span>${x ? '<em>×</em>' : ''}</a>`).join('');

/* price axis */
const fmt = p => { const [a, b] = p.toFixed(6).split('.'); return a.slice(0, 2) + '.' + a.slice(2) + ',' + b; };
const prices = document.getElementById('prices');
const pane = document.getElementById('pane');
let html = '';
for (let p = 23650; p >= 23050; p -= 25) html += `<span class="tick" style="top:${py(priceY(p))}">${fmt(p)}</span>`;
const tags = [[23655.758568, 'yel'], [23588.121086, 'yel'], [23537.161775, 'yel'], [23504, 'navy', 'Hoch'],
  [23438, 'grn', 'FDAXZ2025'], [23278.0584, 'rd'], [23251, 'gry'], [23121, 'navy', 'Tief']];
for (const [p, c, name] of tags) {
  const top = py(priceY(p) + 1);
  html += `<span class="tag ${c}" style="top:${top}">${fmt(p)}</span>`;
  if (name) pane.insertAdjacentHTML('beforeend', `<span class="flag ${c}" style="top:${top}">${name}</span>`);
}
prices.insertAdjacentHTML('beforeend', html);

/* time axis */
document.getElementById('times').innerHTML = [['10:30', 126], ['12:00', 199], ['13:30', 272], ['15:00', 346], ['16:30', 419],
  ['18:00', 492], ['20:00', 590], ['19', 683], ['06:00', 757], ['09:00', 861], ['10:30', 935], ['12:00', 1008], ['13:30', 1081],
  ['15:00', 1154], ['16:30', 1227], ['18:00', 1301], ['20:00', 1396], ['20', 1488], ['07:00', 1554], ['09:00', 1652],
  ['10:30', 1725], ['12:00', 1799]]
  .map(([t, x]) => `<span class="${t.length === 2 ? 'day' : ''}" style="left:${px(x)}">${t}</span>`).join('');

/* wave labels */
const marks = [['g', 'X', 1216, 488], ['g', 'Y', 1545, 837], ['g', 'W', 760, 1174], ['y', 'C', 707, 1098],
  ['o', '(W)', 768, 1128], ['o', '(X)', 1219, 536], ['w', '(Z)', 1214, 552], ['w', '(Y)', 1054, 713], ['w', '(W)', 898, 790],
  ['w', '(X)', 1123, 910], ['w', '(X)', 921, 1069], ['m', 'E', 1489, 843], ['o', '(Y)', 1489, 843], ['m', 'A', 1288, 983],
  ['m', 'B', 1380, 674], ['m', 'D', 1467, 681], ['m', 'C', 1430, 903], ['em', 'E', 545, 746]];
pane.insertAdjacentHTML('beforeend', marks.map(([c, t, x, y]) =>
  `<span class="mark ${c}" style="left:${px(x)};top:${py(y)}">${t}</span>`).join(''));

/* candles: swing points, then a seeded walk between them */
const swings = [71,736,75,790,80,715,85,600,90,646,95,722,100,662,103,722,110,642,112,670,117,603,123,646,128,634,133,722,139,662,141,686,145,613,147,602,155,617,159,670,164,706,170,718,176,658,180,678,186,722,192,715,197,642,204,602,208,646,213,682,220,648,225,658,229,690,235,708,244,686,249,701,251,756,259,804,265,740,271,780,279,740,288,800,290,782,296,812,301,768,306,788,310,764,315,804,323,762,327,840,330,812,334,864,341,838,355,886,361,904,365,886,372,910,373,820,377,776,380,832,382,788,385,854,390,894,394,936,398,1032,403,960,409,1056,413,940,418,904,421,940,425,1020,431,980,436,1016,440,956,448,1022,453,944,457,968,461,926,470,882,475,894,479,846,487,866,491,820,495,818,499,846,502,864,505,860,509,842,514,878,518,936,523,886,526,830,528,796,534,786,541,764,547,734,551,730,554,760,559,776,566,756,571,796,574,748,581,764,584,756,589,810,597,810,602,788,610,820,615,842,621,796,626,836,632,826,637,790,642,824,650,834,657,860,665,834,672,866,676,846,681,870,683,948,688,956,693,936,700,902,707,944,713,890,718,910,723,946,733,874,739,906,743,894,746,968,751,1030,757,996,763,980,768,1026,771,1080,774,1046,778,976,787,940,791,912,797,940,802,920,807,970,811,963,818,920,825,889,839,974,846,920,858,959,867,872,871,976,876,1015,882,876,889,838,896,928,902,954,908,963,915,1030,920,972,930,993,937,963,941,1008,948,928,960,868,969,894,976,855,984,842,992,868,999,920,1009,846,1016,868,1020,829,1032,777,1038,820,1043,764,1051,755,1056,803,1066,798,1071,764,1078,816,1084,798,1090,842,1095,785,1107,837,1117,876,1123,850,1131,755,1135,798,1148,720,1158,720,1164,742,1169,698,1177,738,1184,698,1188,746,1196,664,1206,616,1218,568,1222,612,1227,575,1233,625,1239,720,1245,764,1250,807,1257,824,1262,842,1268,807,1274,863,1280,920,1286,946,1291,902,1297,894,1301,859,1306,915,1313,902,1321,885,1325,842,1333,930,1337,863,1345,872,1351,820,1354,829,1361,764,1364,785,1368,755,1373,794,1378,724,1382,785,1388,807,1393,746,1400,772,1408,790,1413,820,1418,859,1424,868,1429,872,1437,807,1441,833,1448,798,1456,720,1460,755,1465,764,1470,720,1474,759,1478,794,1483,764,1487,794,1489,440,1491,495,1494,505,1498,526,1500,552,1504,582,1509,552,1514,541,1521,567,1527,541,1533,572,1539,557,1545,506,1548,552,1552,557];
let seed = 7;
const rnd = () => (seed = (seed * 16807) % 2147483647) / 2147483647;
const out = { wick: '', up: '', down: '' };
const bar = (k, x, a, b) => { out[k] += `M${x + .5} ${Math.round(a)}V${Math.round(Math.max(b, a + 1))}`; };
let prev = swings[1];
for (let i = 0; i < swings.length - 2; i += 2) {
  const [x0, y0, x1, y1] = swings.slice(i, i + 4);
  if (x0 === 1487) { bar('down', 1488, 420, 520); bar('down', 1492, 483, 522); prev = 470; continue; }
  for (let x = x0; x < x1; x++) {
    const thin = (x > 684 && x < 806) || x > 1496;
    const mid = y0 + (y1 - y0) * (x + 1 - x0) / (x1 - x0);
    const y = mid + (rnd() - .5) * (thin ? 26 : 18);
    if (thin) {
      if (rnd() < .85) bar(rnd() < .65 ? 'up' : 'down', x, y - rnd() * 3, y + 1 + rnd() * (rnd() < .3 ? 16 : 4));
      prev = y;
      continue;
    }
    const lo = Math.min(prev, y), hi = Math.max(prev, y);
    if (rnd() < .55) bar('wick', x, lo - rnd() * 12, hi + rnd() * 12);
    if (rnd() < .88) bar((y < prev) !== (rnd() < .15) ? 'up' : 'down', x, lo, hi + 1);
    prev = y;
  }
}
bar('wick', 84, 588, 610); bar('wick', 116, 592, 612); bar('wick', 204, 588, 605); bar('wick', 1378, 704, 745);
document.getElementById('wicks').setAttribute('d', out.wick);
document.getElementById('ups').setAttribute('d', out.up);
document.getElementById('downs').setAttribute('d', out.down);
```
